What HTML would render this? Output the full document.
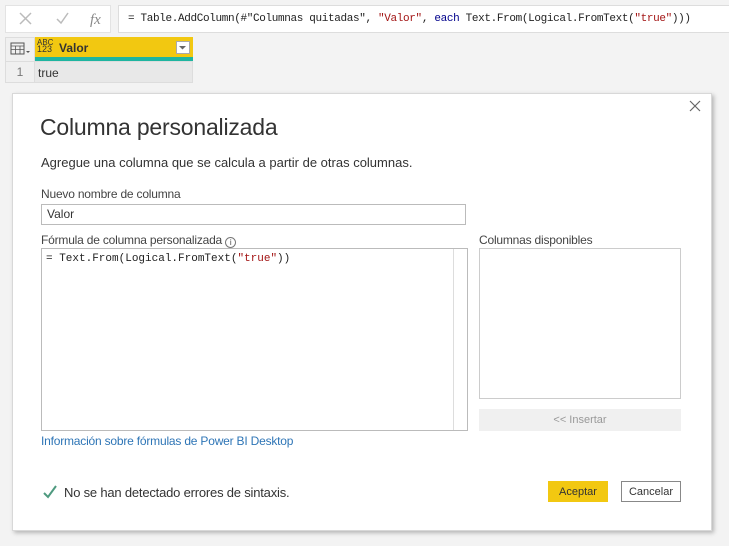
<!DOCTYPE html>
<html><head><meta charset="utf-8"><style>
*{box-sizing:border-box;margin:0;padding:0}
body{width:729px;height:546px;background:#f3f3f3;font-family:"Liberation Sans",sans-serif;position:relative;overflow:hidden;color:#333}
.a{position:absolute}
.mono{font-family:"Liberation Mono",monospace}
.lbl{font-size:12px;color:#444;letter-spacing:-0.2px}
.btn{display:flex;align-items:center;justify-content:center}
</style></head><body>
<div class="a" style="left:5px;top:5px;width:106px;height:28px;background:#fff;border:1px solid #e3e3e3"></div>
<svg class="a" style="left:18px;top:11px" width="90" height="16"><path d="M2 2l11 11M13 2L2 13" stroke="#bbb" stroke-width="1.5" fill="none"/><path d="M39 8l4 4 7-10" stroke="#bbb" stroke-width="1.5" fill="none"/><text x="72" y="13" font-family="Liberation Serif" font-style="italic" font-size="15" fill="#888">fx</text></svg>
<div class="a mono" style="left:118px;top:5px;width:615px;height:28px;background:#fff;border:1px solid #ddd;font-size:11px;letter-spacing:-0.35px;line-height:26px;padding-left:9px;white-space:nowrap;color:#222">= Table.AddColumn(#"Columnas quitadas", <span style="color:#a31515">"Valor"</span>, <span style="color:#00008b">each</span> Text.From(Logical.FromText(<span style="color:#a31515">"true"</span>)))</div>
<div class="a" style="left:5px;top:37px;width:30px;height:46px;background:#f0f0f0;border:1px solid #ddd"></div>
<svg class="a" style="left:10px;top:42px" width="22" height="14"><rect x="1" y="1" width="13" height="11" fill="none" stroke="#555"/><path d="M1 4h13M1 7.5h13M5.5 4v8M10 4v8" stroke="#555" stroke-width=".8"/><path d="M16 9l2 2 2-2z" fill="#555"/></svg>
<div class="a" style="left:35px;top:37px;width:158px;height:20px;background:#f2c811"></div>
<div class="a" style="left:35px;top:57px;width:158px;height:4px;background:#1fb5a0"></div>
<div class="a" style="left:37px;top:39px;font-size:8px;line-height:7px;color:#333">ABC<br><span style="font-size:9px">123</span></div>
<div class="a" style="left:59px;top:41px;font-size:12px;font-weight:bold;color:#333">Valor</div>
<div class="a" style="left:176px;top:41px;width:14px;height:13px;background:#fff;border:1px solid #aaa"></div>
<svg class="a" style="left:179px;top:46px" width="8" height="4"><path d="M0 0h7l-3.5 3.5z" fill="#666"/></svg>
<div class="a" style="left:5px;top:61px;width:188px;height:22px;background:#e8e8e8;border:1px solid #ddd"></div>
<div class="a" style="left:5px;top:61px;width:30px;height:22px;background:#f0f0f0;border:1px solid #ddd;font-size:12px;color:#777;text-align:center;line-height:21px">1</div>
<div class="a" style="left:38px;top:66px;font-size:12px;color:#333">true</div>

<div class="a" style="left:12px;top:93px;width:700px;height:438px;background:#fff;border:1px solid #d8d8d8;box-shadow:2px 2px 4px rgba(0,0,0,.25)"></div>
<svg class="a" style="left:689px;top:100px" width="12" height="12"><path d="M1 1l10 10M11 1L1 11" stroke="#666" stroke-width="1.2"/></svg>
<div class="a" style="left:40px;top:114px;font-size:23px;color:#333;letter-spacing:-0.2px">Columna personalizada</div>
<div class="a" style="left:41px;top:155px;font-size:13px;color:#333;letter-spacing:0px">Agregue una columna que se calcula a partir de otras columnas.</div>
<div class="a lbl" style="left:41px;top:187px">Nuevo nombre de columna</div>
<div class="a" style="left:41px;top:204px;width:425px;height:21px;border:1px solid #bbb;font-size:12px;line-height:19px;padding-left:5px;color:#333">Valor</div>
<div class="a lbl" style="left:41px;top:233px">Fórmula de columna personalizada <span style="display:inline-block;width:11px;height:11px;border:1px solid #777;border-radius:50%;font-size:8px;line-height:9px;text-align:center;vertical-align:-1px">i</span></div>
<div class="a" style="left:41px;top:248px;width:427px;height:183px;border:1px solid #bbb"></div>
<div class="a" style="left:453px;top:249px;width:1px;height:181px;background:#ddd"></div>
<div class="a mono" style="left:46px;top:253px;font-size:11px;color:#222">= Text.From(Logical.FromText(<span style="color:#a31515">"true"</span>))</div>
<div class="a lbl" style="left:479px;top:233px">Columnas disponibles</div>
<div class="a" style="left:479px;top:248px;width:202px;height:151px;border:1px solid #ccc"></div>
<div class="a btn" style="left:479px;top:409px;width:202px;height:22px;background:#f0f0f0;font-size:11px;color:#999">&lt;&lt; Insertar</div>
<div class="a" style="left:41px;top:434px;font-size:12px;color:#2e75b6;letter-spacing:-0.2px">Información sobre fórmulas de Power BI Desktop</div>
<svg class="a" style="left:42px;top:484px" width="16" height="16"><path d="M2 9l4 4 8-11" stroke="#4e9a7f" stroke-width="2" fill="none"/></svg>
<div class="a" style="left:64px;top:485px;font-size:13px;color:#333;letter-spacing:-0.2px">No se han detectado errores de sintaxis.</div>
<div class="a btn" style="left:548px;top:481px;width:60px;height:21px;background:#f2c811;font-size:11px;color:#333">Aceptar</div>
<div class="a btn" style="left:621px;top:481px;width:60px;height:21px;border:1px solid #888;background:#fff;font-size:11px;color:#333">Cancelar</div>
</body></html>
